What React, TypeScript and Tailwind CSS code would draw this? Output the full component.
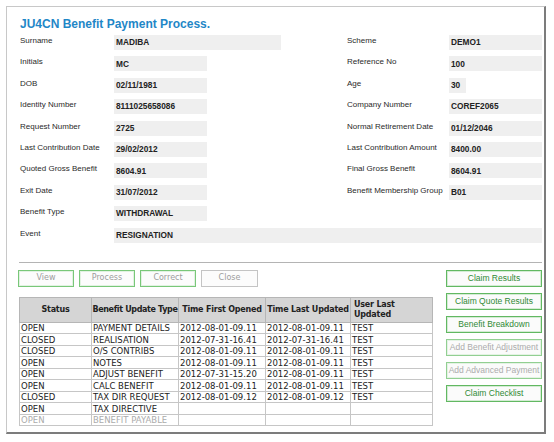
const leftRows: { label: string; value: string; wide?: boolean }[] = [
  { label: "Surname", value: "MADIBA", wide: true },
  { label: "Initials", value: "MC" },
  { label: "DOB", value: "02/11/1981" },
  { label: "Identity Number", value: "8111025658086" },
  { label: "Request Number", value: "2725" },
  { label: "Last Contribution Date", value: "29/02/2012" },
  { label: "Quoted Gross Benefit", value: "8604.91" },
  { label: "Exit Date", value: "31/07/2012" },
  { label: "Benefit Type", value: "WITHDRAWAL" },
]

const rightRows: { label: string; value: string; narrow?: boolean }[] = [
  { label: "Scheme", value: "DEMO1" },
  { label: "Reference No", value: "100" },
  { label: "Age", value: "30", narrow: true },
  { label: "Company Number", value: "COREF2065" },
  { label: "Normal Retirement Date", value: "01/12/2046" },
  { label: "Last Contribution Amount", value: "8400.00" },
  { label: "Final Gross Benefit", value: "8604.91" },
  { label: "Benefit Membership Group", value: "B01" },
]

const updates = [
  ["OPEN", "PAYMENT DETAILS", "2012-08-01-09.11", "2012-08-01-09.11", "TEST"],
  ["CLOSED", "REALISATION", "2012-07-31-16.41", "2012-07-31-16.41", "TEST"],
  ["CLOSED", "O/S CONTRIBS", "2012-08-01-09.11", "2012-08-01-09.11", "TEST"],
  ["OPEN", "NOTES", "2012-08-01-09.11", "2012-08-01-09.11", "TEST"],
  ["OPEN", "ADJUST BENEFIT", "2012-07-31-15.20", "2012-08-01-09.11", "TEST"],
  ["OPEN", "CALC BENEFIT", "2012-08-01-09.11", "2012-08-01-09.11", "TEST"],
  ["CLOSED", "TAX DIR REQUEST", "2012-08-01-09.12", "2012-08-01-09.12", "TEST"],
  ["OPEN", "TAX DIRECTIVE", "", "", ""],
  ["OPEN", "BENEFIT PAYABLE", "", "", ""],
]

const sideButtons = [
  { label: "Claim Results", on: true },
  { label: "Claim Quote Results", on: true },
  { label: "Benefit Breakdown", on: true },
  { label: "Add Benefit Adjustment", on: false },
  { label: "Add Advanced Payment", on: false },
  { label: "Claim Checklist", on: true },
]

function Label({ children, w }: { children: React.ReactNode; w: string }) {
  return <div className={`${w} shrink-0 pl-[1px] pt-[1px] text-[8px] leading-[10px] text-[#2a2a2a]`}>{children}</div>
}

function Value({ children, w }: { children: React.ReactNode; w: string }) {
  return (
    <div className={`${w} h-[15px] shrink-0 bg-[#efefef] pl-[2px] flex items-center text-[8.3px] font-bold text-[#222]`}>
      {children}
    </div>
  )
}

export default function App() {
  return (
    <div className="w-[554px] h-[442px] bg-white p-[6px] font-['Liberation_Sans',Arial,sans-serif]">
      <div className="w-[540px] h-[428px] border-l border-t border-[#c8c8c8] border-r-2 border-b-2 border-r-[#7c7c7c] border-b-[#7c7c7c] pl-[12px] pr-[2px] pt-[10px]">
        {/* Title */}
        <h1 className="h-[14px] leading-[14px] text-[12px] font-bold text-[#1f87c7] pl-[1px]">
          JU4CN Benefit Payment Process.
        </h1>

        {/* Detail fields */}
        <div className="mt-[4px]">
          {leftRows.map((l, i) => {
            const r = rightRows[i]
            return (
              <div key={l.label} className="flex h-[21.4px]">
                <div className="flex w-[327px] shrink-0">
                  <Label w="w-[95px]">{l.label}</Label>
                  <Value w={l.wide ? "w-[167px]" : "w-[93px]"}>{l.value}</Value>
                </div>
                {r && (
                  <div className="flex">
                    <Label w="w-[103px]">{r.label}</Label>
                    <Value w={r.narrow ? "w-[17px]" : "w-[93px]"}>{r.value}</Value>
                  </div>
                )}
              </div>
            )
          })}
          <div className="flex h-[21.4px]">
            <Label w="w-[95px]">Event</Label>
            <Value w="w-[428px]">RESIGNATION</Value>
          </div>
        </div>

        <div className="mt-[13px] border-t border-[#b4b4b4]" />

        {/* Bottom area */}
        <div className="mt-[7px] flex">
          <div className="w-[413px] shrink-0">
            <div className="flex gap-[5px] ml-[-1px] font-['DejaVu_Sans',sans-serif] text-[8px] text-[#9c9c9c]">
              {["View", "Process", "Correct"].map((b) => (
                <button key={b} className="w-[56px] h-[17px] border border-[#79c779] bg-[#fcfcfc] shadow-[inset_0_0_0_1px_#e2f2e2]">
                  {b}
                </button>
              ))}
              <button className="w-[57px] h-[17px] border border-[#c4c4c4] bg-[#fcfcfc]">Close</button>
            </div>

            <table className="mt-[10px] w-[413px] table-fixed border-collapse border border-[#9c9c9c] font-['DejaVu_Sans',sans-serif] text-[8.5px] text-[#222]">
              <colgroup>
                <col className="w-[72px]" />
                <col className="w-[87px]" />
                <col className="w-[87px]" />
                <col className="w-[85px]" />
                <col className="w-[82px]" />
              </colgroup>
              <thead>
                <tr className="h-[25px] bg-[#d5d5d5] text-[8px] font-bold tracking-[-0.2px] text-[#222]">
                  <th className="border border-[#b6b6b6] font-bold whitespace-nowrap">Status</th>
                  <th className="border border-[#b6b6b6] font-bold whitespace-nowrap tracking-[-0.35px]">Benefit Update Type</th>
                  <th className="border border-[#b6b6b6] font-bold whitespace-nowrap">Time First Opened</th>
                  <th className="border border-[#b6b6b6] font-bold whitespace-nowrap">Time Last Updated</th>
                  <th className="border border-[#b6b6b6] font-bold text-left pl-[3px] leading-[10px]">
                    User Last
                    <br />
                    Updated
                  </th>
                </tr>
              </thead>
              <tbody>
                {updates.map((row, i) => (
                  <tr
                    key={i}
                    className={`h-[11.5px] leading-[10px] ${i === updates.length - 1 ? "text-[#ababab]" : ""}`}
                  >
                    {row.map((c, j) => (
                      <td key={j} className="border border-[#c6c6c6] pl-[1px] whitespace-nowrap overflow-hidden">
                        {c}
                      </td>
                    ))}
                  </tr>
                ))}
              </tbody>
            </table>
          </div>

          <div className="ml-[14px] flex flex-col gap-[6px] text-[8.5px]">
            {sideButtons.map((b) => (
              <button
                key={b.label}
                className={`w-[96px] h-[17px] border bg-[#fbfbfb] whitespace-nowrap ${
                  b.on
                    ? "border-[#62b862] text-[#2f8a35] shadow-[inset_0_0_0_1px_#d4ecd4]"
                    : "border-[#92cf92] text-[#ababab] shadow-[inset_0_0_0_1px_#e4f3e4]"
                }`}
              >
                {b.label}
              </button>
            ))}
          </div>
        </div>
      </div>
    </div>
  )
}
